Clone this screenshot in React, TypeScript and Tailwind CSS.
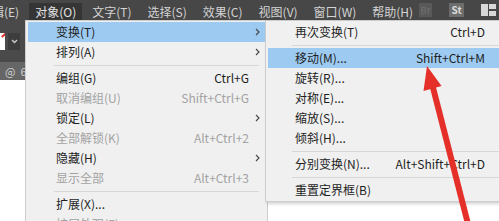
import React from 'react';

type Item = {
  label?: string;
  shortcut?: string;
  disabled?: boolean;
  active?: boolean;
  sub?: boolean;
  sep?: boolean;
};

const mainItems: Item[] = [
  { label: '变换(T)', sub: true, active: true },
  { label: '排列(A)', sub: true },
  { sep: true },
  { label: '编组(G)', shortcut: 'Ctrl+G' },
  { label: '取消编组(U)', shortcut: 'Shift+Ctrl+G', disabled: true },
  { label: '锁定(L)', sub: true },
  { label: '全部解锁(K)', shortcut: 'Alt+Ctrl+2', disabled: true },
  { label: '隐藏(H)', sub: true },
  { label: '显示全部', shortcut: 'Alt+Ctrl+3', disabled: true },
  { sep: true },
  { label: '扩展(X)...' },
  { label: '扩展外观(E)', disabled: true },
];

const subItems: Item[] = [
  { label: '再次变换(T)', shortcut: 'Ctrl+D' },
  { sep: true },
  { label: '移动(M)...', shortcut: 'Shift+Ctrl+M', active: true },
  { label: '旋转(R)...' },
  { label: '对称(E)...' },
  { label: '缩放(S)...' },
  { label: '倾斜(H)...' },
  { sep: true },
  { label: '分别变换(N)...', shortcut: 'Alt+Shift+Ctrl+D' },
  { sep: true },
  { label: '重置定界框(B)' },
];

const menuBar = ['编辑(E)', '对象(O)', '文字(T)', '选择(S)', '效果(C)', '视图(V)', '窗口(W)', '帮助(H)'];

const Chevron = () => (
  <svg width="5" height="8" viewBox="0 0 5 8" fill="none">
    <path d="M1 1l3 3-3 3" stroke="#444" strokeWidth="1.1" />
  </svg>
);

const MenuRows = ({ items, main }: { items: Item[]; main?: boolean }) => (
  <>
    {items.map((it, i) =>
      it.sep ? (
        <div key={i} className="h-[6px] flex items-center">
          <div className={`h-px bg-[#d7d7d7] flex-1 ${main ? 'ml-[26px] mr-[6px]' : 'ml-[24px]'}`} />
        </div>
      ) : (
        <div
          key={i}
          className={`h-5 flex items-center ${it.active ? 'bg-[#9dcaf0]' : ''} ${
            it.disabled ? 'text-[#a3a3a3]' : 'text-[#1e1e1e]'
          } ${main ? 'pl-[28px]' : 'pl-[27px] pr-[15px]'}`}
        >
          <span className="flex-1 whitespace-nowrap">{it.label}</span>
          {it.shortcut && <span className="whitespace-nowrap">{it.shortcut}</span>}
          {main && (
            <span className="w-4 flex justify-center">{it.sub && <Chevron />}</span>
          )}
        </div>
      )
    )}
  </>
);

export default function App() {
  return (
    <div
      className="relative w-[499px] h-[221px] overflow-hidden bg-white text-[12px] leading-none"
      style={{ fontFamily: '"Noto Sans CJK SC", "Noto Sans", sans-serif' }}
    >
      {/* menu bar */}
      <div className="h-5 bg-[#474747] flex items-end">
        <div className="flex items-end gap-[4px] ml-[-26px]">
          {menuBar.map((m) => (
            <div
              key={m}
              className={`h-[17px] px-[6px] flex items-center whitespace-nowrap ${
                m === '对象(O)' ? 'bg-[#353535] text-[#e2e2e2]' : 'text-[#d4d4d4]'
              }`}
            >
              {m}
            </div>
          ))}
        </div>
        <div className="ml-auto flex items-center gap-[17px] h-5 pr-[9px]">
          <div className="w-[13px] h-[14px] bg-[#595959] text-[#6a6a6a] text-[9px] font-bold flex items-center justify-center">
            Br
          </div>
          <div className="w-[15px] h-[14px] bg-[#6d6d6d] text-[#dadada] text-[10px] font-bold flex items-center justify-center">
            St
          </div>
          <svg width="15" height="12" viewBox="0 0 15 12">
            <rect x="0" y="0" width="7" height="12" fill="#d8d8d8" />
            <rect x="8" y="0" width="7" height="5" fill="#d8d8d8" />
            <rect x="8" y="7" width="7" height="5" fill="#d8d8d8" />
          </svg>
        </div>
      </div>

      {/* body */}
      <div className="flex h-[201px]">
        <div className="w-[25px] flex flex-col">
          <div className="h-[42px] bg-[#4a4a4a] flex items-center gap-[3px]">
            <div className="relative w-[5px] h-[17px] bg-white overflow-hidden">
              <div className="absolute right-[-2px] top-[1px] w-[6px] h-[2px] bg-[#e0322a] rotate-[-40deg]" />
            </div>
            <div className="w-[12px] h-[17px] bg-[#3d3d3d] flex items-center justify-center">
              <svg width="7" height="5" viewBox="0 0 7 5" fill="none">
                <path d="M1 1l2.5 2.5L6 1" stroke="#d0d0d0" strokeWidth="1.3" />
              </svg>
            </div>
          </div>
          <div className="h-[18px] bg-[#666666] text-[#cfcfcf] text-[11px] flex items-center pl-[5px] gap-[5px]">
            <span>@</span>
            <span>6</span>
          </div>
        </div>
        <div className="flex-1 bg-white" />
      </div>

      {/* object menu */}
      <div className="absolute left-[25px] top-5 w-[243px] h-[215px] bg-[#f0f0f0] border border-[#cdcdcd] px-[2px] pt-px">
        <MenuRows items={mainItems} main />
      </div>

      {/* transform submenu */}
      <div className="absolute left-[265px] top-5 w-[238px] bg-[#f0f0f0] border border-[#cdcdcd] px-[2px] py-px shadow-[2px_2px_3px_rgba(0,0,0,0.18)]">
        <MenuRows items={subItems} />
      </div>

      {/* red arrow */}
      <svg className="absolute inset-0 pointer-events-none" width="499" height="221" viewBox="0 0 499 221">
        <line x1="432.6" y1="86" x2="468" y2="224" stroke="#e5302a" strokeWidth="6" />
        <polygon points="427,66 441.5,86 423.5,91" fill="#e5302a" />
      </svg>
    </div>
  );
}
